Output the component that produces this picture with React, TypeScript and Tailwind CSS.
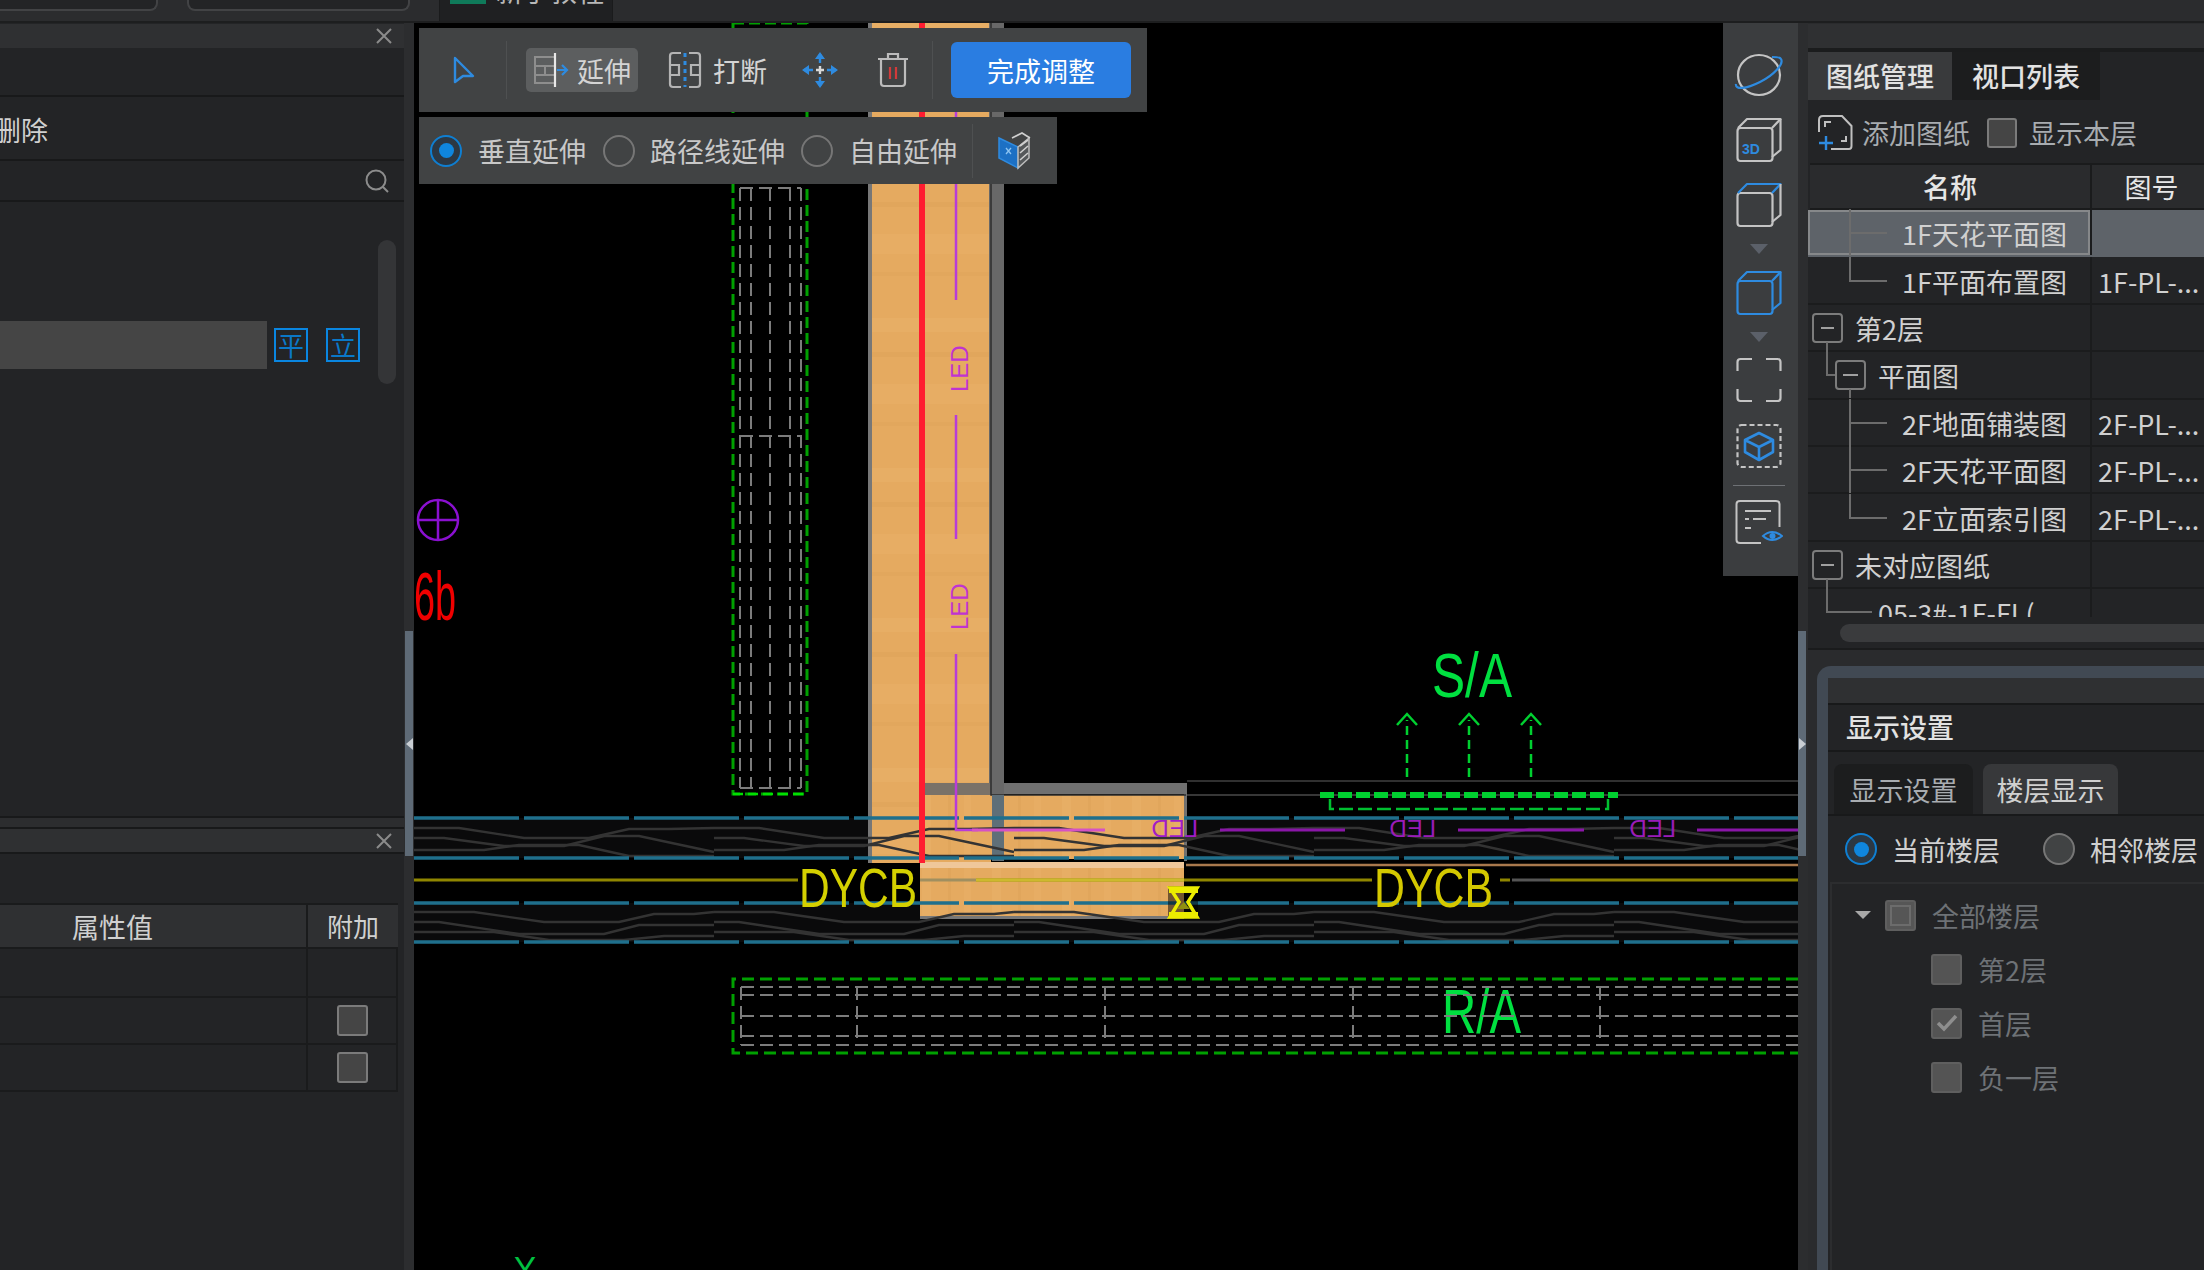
import React from "react";

const BLUE = "#2e8be0";
const GR = "#c4c4c4";

function Cube({ top, all, label }: { top?: boolean; all?: boolean; label?: boolean }) {
  const c = all ? BLUE : GR;
  const t = top || all ? BLUE : GR;
  return (
    <svg width="46" height="46" viewBox="0 0 46 46" fill="none" strokeWidth="2.2" strokeLinejoin="round">
      <rect x="1.5" y="11" width="35" height="33" rx="3" stroke={c} />
      <path d="M2 11 L11 2 H44.5 L36 11" stroke={t} />
      <path d="M44.5 2 V33 L36 40" stroke={all ? BLUE : GR} />
      {label && <text x="6" y="37" fontSize="14" fontWeight="700" fill={BLUE} className="font-['Liberation_Sans',sans-serif]">3D</text>}
    </svg>
  );
}

function Tri() {
  return <div className="mx-auto h-0 w-0 border-x-[9px] border-t-[10px] border-x-transparent border-t-[#5b6069]" />;
}

function VerticalTools() {
  return (
    <div className="absolute right-0 top-0 flex h-[553px] w-[75px] flex-col items-center bg-[#3b3d3f] pr-[3px] pt-[29px]">
      <svg width="50" height="46" viewBox="0 0 50 46" fill="none" strokeWidth="2.2">
        <ellipse cx="25" cy="23" rx="21" ry="20" stroke={GR} />
        <path d="M2 32 C1 38 12 37 26 30 C40 23 50 12 47 7 C46 5 42 5 38 5" stroke={BLUE} />
      </svg>
      <div className="mt-[19px]"><Cube label /></div>
      <div className="mt-[19px]"><Cube top /></div>
      <div className="mt-[16px]"><Tri /></div>
      <div className="mt-[16px]"><Cube all /></div>
      <div className="mt-[16px]"><Tri /></div>
      <svg className="mt-[15px]" width="46" height="46" viewBox="0 0 46 46" fill="none" stroke={GR} strokeWidth="2.2">
        <path d="M1.5 14 V5 Q1.5 2 4.5 2 H16 M30 2 H41.5 Q44.5 2 44.5 5 V14 M44.5 32 V41 Q44.5 44 41.5 44 H30 M16 44 H4.5 Q1.5 44 1.5 41 V32" />
      </svg>
      <svg className="mt-[20px]" width="46" height="46" viewBox="0 0 46 46" fill="none" strokeWidth="2.2">
        <rect x="1.5" y="2" width="43" height="42" rx="4" stroke={GR} strokeDasharray="5 3" />
        <path d="M23 10 L37 17 V29 L23 37 L9 29 V17 Z M9 17 L23 24 L37 17 M23 24 V37" stroke={BLUE} strokeWidth="2.6" strokeLinejoin="round" />
      </svg>
      <div className="mt-[16px] h-px w-[52px] bg-[#6e7175]" />
      <svg className="mt-[13px]" width="48" height="46" viewBox="0 0 48 46" fill="none" strokeWidth="2">
        <path d="M26 44 H5 Q1.5 44 1.5 41 V5 Q1.5 2 5 2 H41 Q44.5 2 44.5 5 V28" stroke={GR} />
        <path d="M10 12 H36 M10 20 H14 M18 20 H31 M10 29 H16" stroke={GR} />
        <path d="M28 37 Q37 29 47 37 Q37 45 28 37 Z" stroke={BLUE} />
        <circle cx="37.5" cy="37" r="3" fill={BLUE} />
      </svg>
    </div>
  );
}

function Radio({ on, size = 32 }: { on?: boolean; size?: number }) {
  return (
    <span
      style={{ width: size, height: size }}
      className={`flex shrink-0 items-center justify-center rounded-full border-2 ${on ? "border-[#0f7fd2] bg-[#2c3844]" : "border-[#767676] bg-[#414344]"}`}
    >
      {on && <span className="h-[15px] w-[15px] rounded-full bg-[#0f86de]" />}
    </span>
  );
}

function Toolbars() {
  return (
    <>
      <div className="absolute left-[5px] top-[5px] flex h-[84px] w-[728px] items-center bg-[#414344] text-[27px] leading-none text-[#d4d4d4]">
        <svg className="ml-[33px]" width="24" height="30" viewBox="0 0 24 30" fill="none" stroke={BLUE} strokeWidth="2.4" strokeLinejoin="round">
          <path d="M3 3 L21 21 L11 21 L3 27 Z" />
        </svg>
        <div className="ml-[30px] h-[58px] w-px bg-[#4e5051]" />
        <div className="ml-[19px] flex h-[44px] w-[112px] items-center rounded-[5px] bg-[#5c5e5f]">
          <svg className="ml-[7px]" width="36" height="36" viewBox="0 0 36 36" fill="none">
            <path d="M2 5 H22 V31 H2 Z M2 14 H22 M2 23 H22 M12 14 V23" stroke="#8e8e8e" strokeWidth="2" />
            <path d="M22 1 V35" stroke="#e8e8e8" strokeWidth="2.2" />
            <path d="M24 18 H34 M29 13 L34 18 L29 23" stroke={BLUE} strokeWidth="2.2" />
          </svg>
          <span className="ml-[8px]">延伸</span>
        </div>
        <svg className="ml-[30px]" width="34" height="38" viewBox="0 0 34 38" fill="none" strokeWidth="2.2">
          <path d="M13 2 H5 Q2 2 2 5 V33 Q2 36 5 36 H13 M21 2 H29 Q32 2 32 5 V33 Q32 36 29 36 H21 M2 14 H11 V24 H2 M32 14 H23 V24 H32" stroke="#b4b4b4" />
          <path d="M17 2 V36" stroke={BLUE} strokeWidth="3" strokeDasharray="4 4" />
        </svg>
        <span className="ml-[11px]">打断</span>
        <svg className="ml-[34px]" width="38" height="38" viewBox="0 0 38 38" fill="none" strokeWidth="2.4">
          <path d="M19 3 V12 M19 26 V35 M3 19 H12 M26 19 H35" stroke={BLUE} />
          <path d="M19 1 L14 8 H24 Z M19 37 L14 30 H24 Z M1 19 L8 14 V24 Z M37 19 L30 14 V24 Z" fill={BLUE} />
          <path d="M19 15 V23 M15 19 H23" stroke="#d8d8d8" />
        </svg>
        <svg className="ml-[38px]" width="32" height="36" viewBox="0 0 32 36" fill="none" strokeWidth="2.2">
          <path d="M1 7 H31 M11 6 V2 H21 V6 M4 8 V31 Q4 34 7 34 H25 Q28 34 28 31 V8" stroke="#bcbcbc" />
          <path d="M13 15 V27 M19 15 V27" stroke="#d13a3a" />
        </svg>
        <div className="ml-[23px] h-[58px] w-px bg-[#4e5051]" />
        <div className="ml-[18px] flex h-[56px] w-[180px] items-center justify-center rounded-[6px] bg-[#2a7de1] text-white">完成调整</div>
      </div>
      <div className="absolute left-[5px] top-[94px] flex h-[67px] w-[638px] items-center bg-[#414344] text-[27px] leading-none text-[#c8c8c8]">
        <span className="ml-[11px]"><Radio on /></span>
        <span className="ml-[16px]">垂直延伸</span>
        <span className="ml-[17px]"><Radio /></span>
        <span className="ml-[15px]">路径线延伸</span>
        <span className="ml-[16px]"><Radio /></span>
        <span className="ml-[16px]">自由延伸</span>
        <div className="ml-[15px] h-[54px] w-px bg-[#4e5051]" />
        <svg className="ml-[25px]" width="34" height="38" viewBox="0 0 34 38" fill="none">
          <path d="M1 6 L20 15 V36 L1 26 Z" fill="#1c70c4" stroke={BLUE} strokeWidth="1.5" />
          <path d="M20 15 L31 6 V26 L20 36 Z" fill="#55585a" stroke="#bcbcbc" strokeWidth="1.5" />
          <path d="M14 6 L24 1 L32 6 M22 14 L30 8 M22 21 L30 14 M22 28 L30 21" stroke="#cfcfcf" strokeWidth="1.6" />
          <path d="M8 16 L13 22 M8 22 L13 16" stroke="#8cc4f2" strokeWidth="1.3" />
        </svg>
      </div>
    </>
  );
}

const waveA = "M0 828 H45 L110 838 H175 L215 829 H255 L300 828";
const waveB = "M0 838 H30 L90 846 H150 L190 836 H225 L300 852";
const waveC = "M0 850 H70 L105 845 H165 L215 856 H300";
const waveD = "M0 912 L60 912 L130 922 H205 L240 914 H280 L300 912";
const waveE = "M0 922 H25 L105 934 H190 L225 925 H300";
const waveF = "M0 932 H80 L135 940 H210 L250 936 H300";
const offs = [414, 714, 1014, 1314, 1614];

function Canvas() {
  const sans = "font-['Liberation_Sans',sans-serif]";
  return (
    <svg className="absolute inset-0" width="1384" height="1247" viewBox="414 23 1384 1247">
      <defs>
        <pattern id="woodV" width="133" height="150" patternUnits="userSpaceOnUse">
          <rect width="133" height="150" fill="#e5aa60" />
          <rect y="18" width="133" height="14" fill="#e7ae65" />
          <rect y="52" width="133" height="5" fill="#e1a65c" />
          <rect y="84" width="133" height="20" fill="#e7ad64" />
          <rect y="122" width="133" height="4" fill="#e2a75d" />
        </pattern>
        <pattern id="woodH" width="70" height="60" patternUnits="userSpaceOnUse">
          <rect width="70" height="60" fill="#e5aa60" />
          <rect x="12" width="9" height="60" fill="#e7ae65" />
          <rect x="38" width="3" height="60" fill="#e1a65c" />
          <rect x="54" width="7" height="60" fill="#e7ad64" />
        </pattern>
      </defs>
      <rect x="414" y="23" width="1384" height="1247" fill="#000" />

      {/* upper duct */}
      <rect x="733" y="23" width="74" height="771" fill="none" stroke="#00a000" strokeWidth="3" strokeDasharray="11 5" />
      <path d="M733 794 H807" stroke="#00e000" strokeWidth="2.5" strokeDasharray="10 5" />
      <g stroke="#7c7c7c" strokeWidth="2" strokeDasharray="13 6" fill="none">
        <path d="M740 188 V788 M751 188 V788 M770 188 V788 M790 188 V788 M801 188 V788" />
        <path d="M740 188 H801 M740 436 H801 M740 788 H801" />
      </g>

      {/* insulation bands */}
      <rect x="414" y="818" width="1384" height="40" fill="#0a0a0b" />
      <rect x="414" y="903" width="1384" height="39" fill="#0a0a0b" />

      {/* wood */}
      <rect x="868" y="23" width="123" height="840" fill="url(#woodV)" />
      <rect x="868" y="23" width="4" height="840" fill="#777" />
      <rect x="925" y="795" width="259" height="64" fill="url(#woodH)" />
      <rect x="920" y="862" width="264" height="57" fill="url(#woodH)" />
      <rect x="920" y="862" width="264" height="6" fill="#efc79a" />
      <rect x="920" y="916" width="248" height="3" fill="#777" />
      <rect x="1184" y="783" width="3" height="78" fill="#707070" />

      <rect x="989" y="23" width="15" height="772" fill="#686868" />
      <path d="M991 23 V795 H1186" stroke="#2c2c2c" strokeWidth="1.5" fill="none" />
      <rect x="992" y="795" width="12" height="66" fill="#5f6f78" />
      <rect x="925" y="783" width="65" height="12" fill="#7a7268" />
      <rect x="1004" y="783" width="180" height="11" fill="#707070" />

      {/* waves */}
      <g fill="none" stroke="#333333" strokeWidth="2.4">
        {offs.map((x) => (
          <g key={x} transform={`translate(${x} 0)`}>
            <path d={waveA} />
            <path d={waveB} />
            <path d={waveC} />
            <path d={waveD} />
            <path d={waveE} />
            <path d={waveF} />
          </g>
        ))}
      </g>

      {/* horizontal rules */}
      <path d="M1187 781 H1798" stroke="#303030" strokeWidth="2" />
      <path d="M1187 795 H1798" stroke="#4a4a4a" strokeWidth="1.5" />
      <path d="M414 818 H1798 M414 858 H1798 M414 903 H1798 M414 942 H1798" stroke="#1f6f8c" strokeWidth="3.5" strokeDasharray="105 5" />
      <path d="M1186 865 H1798" stroke="#a8784c" strokeWidth="2.5" />
      <path d="M414 880 H798 M976 880 H1372 M1500 880 H1510 M1550 880 H1798" stroke="#8f8600" strokeWidth="3" />
      <path d="M920 880 H976" stroke="#a08f60" strokeWidth="3" />
      <path d="M976 880 H1184" stroke="#cdb92e" strokeWidth="3" />
      <path d="M1512 880 H1550" stroke="#555" strokeWidth="3" />

      {/* magenta LED */}
      <path d="M956 28 V300 M956 415 V539 M956 654 V830 H978" stroke="#b83cd8" strokeWidth="2.5" fill="none" />
      <path d="M972 830 H1105" stroke="#d552c4" strokeWidth="3" />
      <path d="M1220 830 H1345 M1458 830 H1584 M1697 830 H1798" stroke="#8a16a8" strokeWidth="3" />
      <text transform="translate(968 392) rotate(-90)" fontSize="24" fill="#c033d0" className={sans}>LED</text>
      <text transform="translate(968 630) rotate(-90)" fontSize="24" fill="#c033d0" className={sans}>LED</text>
      <text transform="translate(1198 837) scale(-1 1)" fontSize="24" fill="#a21cc8" className={sans}>LED</text>
      <text transform="translate(1436 837) scale(-1 1)" fontSize="24" fill="#9a1cb8" className={sans}>LED</text>
      <text transform="translate(1676 837) scale(-1 1)" fontSize="24" fill="#9a1cb8" className={sans}>LED</text>

      {/* red */}
      <rect x="919" y="23" width="6" height="840" fill="#ff1c30" />

      {/* labels */}
      <text x="799" y="907" fontSize="56" textLength="118" lengthAdjust="spacingAndGlyphs" fill="#d4d000" className={sans}>DYCB</text>
      <text x="1374" y="907" fontSize="56" textLength="119" lengthAdjust="spacingAndGlyphs" fill="#d4c800" className={sans}>DYCB</text>
      <text x="1432" y="697" fontSize="63" textLength="80" lengthAdjust="spacingAndGlyphs" fill="#00e040" className={sans}>S/A</text>
      <text x="1442" y="1033" fontSize="63" textLength="79" lengthAdjust="spacingAndGlyphs" fill="#00e040" className={sans}>R/A</text>
      <text x="414" y="620" fontSize="68" textLength="42" lengthAdjust="spacingAndGlyphs" fill="#f00000" className={sans}>6b</text>
      <text x="514" y="1280" fontSize="34" textLength="22" lengthAdjust="spacingAndGlyphs" fill="#00c040" className={sans}>Y</text>

      {/* purple target */}
      <g stroke="#8a10d0" strokeWidth="2.5" fill="none">
        <circle cx="438" cy="520" r="20" />
        <path d="M418 520 H458 M438 500 V540" />
      </g>

      {/* S/A arrows */}
      <g stroke="#00d030" strokeWidth="2.5" fill="none">
        <path d="M1407 777 V720 M1469 777 V720 M1531 777 V720" strokeDasharray="9 5" />
        <path d="M1397 725 L1407 714 L1417 725 M1459 725 L1469 714 L1479 725 M1521 725 L1531 714 L1541 725" />
      </g>
      <path d="M1320 795 H1618" stroke="#00d030" strokeWidth="6" strokeDasharray="14 4" />
      <path d="M1330 799 V809 H1608 V799" fill="none" stroke="#00c030" strokeWidth="2.5" strokeDasharray="14 5" />

      {/* lower duct */}
      <path d="M1798 979 H733 V1053 H1798" fill="none" stroke="#00a000" strokeWidth="3" strokeDasharray="12 6" />
      <g stroke="#7c7c7c" strokeWidth="2" fill="none">
        <path d="M741 987 H1798 M741 995 H1798 M741 1016 H1798 M741 1036 H1798 M741 1045 H1798" strokeDasharray="13 6" />
        <path d="M741 987 V1045 M857 987 V1045 M1105 987 V1045 M1353 987 V1045 M1600 987 V1045" strokeDasharray="13 6" />
      </g>

      {/* hourglass */}
      <rect x="1168" y="886" width="30" height="33" fill="#000" opacity="0.5" />
      <path d="M1170 888 H1197 L1188 902 L1197 917 H1170 L1179 902 Z" fill="none" stroke="#ecec00" strokeWidth="3.5" />
      <path d="M1169 888 H1198 V893 H1169 Z M1169 912 H1198 V918 H1169 Z" fill="#ecec00" />
      <path d="M1177 909 H1190 L1184 902 Z" fill="#8f8f10" />
    </svg>
  );
}

function CloseX() {
  return (
    <svg width="16" height="16" viewBox="0 0 16 16" stroke="#8b8b8b" strokeWidth="2" className="mr-[12px]">
      <path d="M1 1 L15 15 M15 1 L1 15" />
    </svg>
  );
}

function Check({ className = "" }: { className?: string }) {
  return <span className={`block shrink-0 rounded-[3px] border-2 border-[#7b7b7b] bg-[#454545] ${className}`} />;
}

function BlueSquare({ t, className = "" }: { t: string; className?: string }) {
  return (
    <span className={`flex h-[34px] w-[34px] items-center justify-center border-2 border-[#0a86e0] text-[26px] leading-none text-[#0a78c8] ${className}`}>{t}</span>
  );
}

function LeftPanel() {
  return (
    <div className="flex w-[404px] shrink-0 flex-col bg-[#232426] text-[27px] leading-none text-[#d0d0d0]">
      <div className="h-px shrink-0" />
      <div className="flex h-[24px] shrink-0 items-center justify-end bg-[#2f3032]"><CloseX /></div>
      <div className="h-[49px] shrink-0 border-b-2 border-[#18191a]" />
      <div className="flex h-[64px] shrink-0 items-center overflow-hidden border-b-2 border-[#18191a] pt-[3px]">
        <span className="-ml-[6px]">删除</span>
      </div>
      <div className="flex h-[41px] shrink-0 items-center justify-end border-b-2 border-[#18191a] pr-[15px] pt-[1px]">
        <svg width="24" height="24" viewBox="0 0 24 24" fill="none" stroke="#8c8c8c" strokeWidth="2">
          <circle cx="11" cy="11" r="9.5" />
          <path d="M18 18 L23 23" />
        </svg>
      </div>
      <div className="flex h-[614px] shrink-0">
        <div className="flex h-[167px] w-[378px] items-end">
          <div className="h-[48px] w-[267px] bg-[#454545]" />
          <BlueSquare t="平" className="mb-[7px] ml-[7px]" />
          <BlueSquare t="立" className="mb-[7px] ml-[18px]" />
        </div>
        <div className="mt-[38px] h-[144px] w-[18px] rounded-full bg-[#343537]" />
      </div>
      <div className="h-[13px] shrink-0 border-y-2 border-[#18191a] bg-[#2c2d2f]" />
      <div className="flex h-[23px] shrink-0 items-center justify-end bg-[#2f3032]"><CloseX /></div>
      <div className="h-[51px] shrink-0 border-y-2 border-b-0 border-[#18191a]" />
      <div className="flex h-[46px] w-[398px] shrink-0 border-y-2 border-[#1a1b1c] bg-[#2f3032]">
        <div className="flex w-[306px] items-center pl-[72px]">属性值</div>
        <div className="flex flex-1 items-center justify-center border-l-2 border-[#1a1b1c] text-[26px]">附加</div>
      </div>
      {[false, true, true].map((c, i) => (
        <div key={i} className={`flex w-[398px] shrink-0 border-b-2 border-[#1a1b1c] ${i === 0 ? "h-[49px]" : "h-[47px]"}`}>
          <div className="w-[306px]" />
          <div className="flex flex-1 items-center justify-center border-x-2 border-[#1a1b1c]">
            {c && <Check className="h-[31px] w-[31px]" />}
          </div>
        </div>
      ))}
    </div>
  );
}

function Gutter({ dir }: { dir: "l" | "r" }) {
  return (
    <div className="flex w-[10px] shrink-0 flex-col bg-[#2c2d2f]">
      <div className="h-[608px] shrink-0" />
      <div className={`flex h-[225px] w-[8px] items-center justify-center bg-[#5e6a76] ${dir === "l" ? "ml-px" : ""}`}>
        {dir === "l" ? (
          <span className="h-0 w-0 border-y-[6px] border-r-[7px] border-y-transparent border-r-[#c9ced3]" />
        ) : (
          <span className="h-0 w-0 border-y-[6px] border-l-[7px] border-y-transparent border-l-[#c9ced3]" />
        )}
      </div>
    </div>
  );
}

type Kind = "first" | "mid" | "last" | "l1" | "l2" | "l3";

function TreeGlyph({ kind, sel }: { kind: Kind; sel?: boolean }) {
  const s = "#6c6c6c";
  if (kind === "first" || kind === "mid" || kind === "last") {
    return (
      <svg width="94" height="47" viewBox="0 0 94 47" fill="none" stroke={s} strokeWidth="2" className={`shrink-0 ${sel ? "-ml-[2px]" : ""}`}>
        <path d={kind === "last" ? "M42 0 V24 H79" : "M42 0 V47 M42 24 H79"} />
      </svg>
    );
  }
  if (kind === "l1") {
    return (
      <svg width="47" height="47" viewBox="0 0 47 47" fill="none" stroke={s} strokeWidth="2" className="shrink-0">
        <rect x="5" y="10" width="29" height="28" rx="3" stroke="#7c7c7c" />
        <path d="M13 24 H26" stroke="#a0a0a0" />
        <path d="M19 38 V47" />
      </svg>
    );
  }
  if (kind === "l2") {
    return (
      <svg width="70" height="47" viewBox="0 0 70 47" fill="none" stroke={s} strokeWidth="2" className="shrink-0">
        <path d="M19 0 V24 H28" />
        <rect x="28" y="10" width="29" height="28" rx="3" stroke="#7c7c7c" />
        <path d="M35 24 H50" stroke="#a0a0a0" />
        <path d="M42 38 V47" />
      </svg>
    );
  }
  return (
    <svg width="70" height="47" viewBox="0 0 70 47" fill="none" stroke={s} strokeWidth="2" className="shrink-0">
      <path d="M19 0 V24 H64" />
    </svg>
  );
}

const rows: { kind: Kind; name: string; no?: string; sel?: boolean }[] = [
  { kind: "mid", name: "1F天花平面图", sel: true },
  { kind: "last", name: "1F平面布置图", no: "1F-PL-..." },
  { kind: "l1", name: "第2层" },
  { kind: "l2", name: "平面图" },
  { kind: "mid", name: "2F地面铺装图", no: "2F-PL-..." },
  { kind: "mid", name: "2F天花平面图", no: "2F-PL-..." },
  { kind: "last", name: "2F立面索引图", no: "2F-PL-..." },
  { kind: "l1", name: "未对应图纸" },
  { kind: "l3", name: "05-3#-1F-FL(" },
];

function RightPanel() {
  return (
    <div className="flex w-[396px] shrink-0 flex-col overflow-hidden bg-[#2a2b2d] text-[27px] leading-none text-[#d0d0d0]">
      <div className="h-px shrink-0" />
      <div className="h-[24px] shrink-0 bg-[#2f3032]" />
      <div className="h-[4px] shrink-0 bg-[#1b1c1d]" />
      <div className="flex h-[48px] shrink-0 bg-[#232426]">
        <div className="flex w-[144px] items-center justify-center bg-[#393a3c] pb-[2px] font-medium text-[#e2e2e2]">图纸管理</div>
        <div className="flex w-[148px] items-center justify-center bg-[#1c1d1e] pb-[2px] font-medium text-[#e2e2e2]">视口列表</div>
      </div>
      <div className="flex h-[63px] shrink-0 items-center bg-[#232426] pt-[2px] text-[#a8acb0]">
        <svg className="ml-[9px]" width="36" height="38" viewBox="0 0 36 38" fill="none" strokeWidth="2">
          <path d="M14 35 H32 Q34.5 35 34.5 32 V12 L25 2 H6 Q2 2 2 6 V18" stroke="#c0c0c0" />
          <path d="M8 13 V8 H14 M24 27 H29 V22" stroke="#c0c0c0" />
          <path d="M9 22 V36 M2 29 H16" stroke={BLUE} strokeWidth="2.4" />
        </svg>
        <span className="ml-[9px]">添加图纸</span>
        <Check className="ml-[17px] h-[30px] w-[30px]" />
        <span className="ml-[12px]">显示本层</span>
      </div>
      <div className="h-[454px] shrink-0 overflow-hidden bg-[#232426] pl-[2px]">
        <div className="flex h-[47px] border-y-2 border-[#1a1b1c] bg-[#2a2b2d] font-medium text-[#e6e6e6]">
          <div className="flex w-[280px] items-center justify-center">名称</div>
          <div className="flex flex-1 items-center justify-center border-l-2 border-[#1a1b1c] pl-[7px] font-normal">图号</div>
        </div>
        {rows.map((r) => (
          <div key={r.name} className={`-ml-[2px] flex h-[47.4px] border-b-2 ${r.sel ? "border-[#5e6369] bg-[#5e6369]" : "border-[#1b1c1d]"}`}>
            <div className={`flex w-[282px] shrink-0 items-center ${r.sel ? "border-2 border-[#86888a]" : ""}`}>
              <TreeGlyph kind={r.kind} sel={r.sel} />
              <span className="whitespace-nowrap pt-[2px]">{r.name}</span>
            </div>
            <div className="flex flex-1 items-center whitespace-nowrap border-l-2 border-[#1b1c1d] pl-[6px] pt-[2px]">{r.no}</div>
          </div>
        ))}
      </div>
      <div className="flex h-[33px] shrink-0 items-center border-b-2 border-[#1a1b1c] bg-[#232426] pl-[32px]">
        <div className="h-[18px] flex-1 rounded-l-full bg-[#3a3b3d]" />
      </div>
      <div className="h-[16px] shrink-0" />
      <div className="ml-[9px] flex flex-1 flex-col rounded-tl-[14px] border-l-[11px] border-t-[12px] border-[#414953] bg-[#232426]">
        <div className="h-[25px] shrink-0 bg-[#2f3032]" />
        <div className="flex h-[49px] shrink-0 items-center border-y-2 border-[#18191a] pb-[2px] pl-[18px] font-medium text-[#e2e2e2]">显示设置</div>
        <div className="flex h-[64px] shrink-0 items-end border-b-2 border-[#18191a] pl-[6px]">
          <div className="flex h-[50px] w-[139px] items-center justify-center rounded-t-[8px] bg-[#1c1d1e] text-[#a8acb0]">显示设置</div>
          <div className="ml-[10px] flex h-[50px] w-[135px] items-center justify-center rounded-t-[8px] bg-[#37383a]">楼层显示</div>
        </div>
        <div className="flex h-[66px] shrink-0 items-center pl-[17px]">
          <Radio on />
          <span className="ml-[15px]">当前楼层</span>
          <span className="ml-[43px]"><Radio /></span>
          <span className="ml-[15px] whitespace-nowrap">相邻楼层</span>
        </div>
        <div className="ml-[2px] flex flex-1 flex-col border-l-2 border-t-2 border-[#2c2d2f] pt-[4px] text-[#6e7276]">
          <div className="flex h-[54px] items-center">
            <span className="ml-[23px] h-0 w-0 border-x-[8px] border-t-[8px] border-x-transparent border-t-[#a8a8a8]" />
            <span className="ml-[14px] flex h-[31px] w-[31px] items-center justify-center rounded-[3px] border-2 border-[#5f5f5f] bg-[#565656]">
              <span className="h-[21px] w-[21px] border-2 border-[#6c6c6c]" />
            </span>
            <span className="ml-[16px]">全部楼层</span>
          </div>
          <div className="flex h-[54px] items-center pl-[99px]">
            <span className="h-[31px] w-[31px] rounded-[3px] border-2 border-[#5f5f5f] bg-[#545454]" />
            <span className="ml-[16px]">第2层</span>
          </div>
          <div className="flex h-[54px] items-center pl-[99px]">
            <span className="flex h-[31px] w-[31px] items-center justify-center rounded-[3px] border-2 border-[#5f5f5f] bg-[#545454]">
              <svg width="22" height="18" viewBox="0 0 22 18" fill="none" stroke="#8e8e8e" strokeWidth="3.5"><path d="M2 9 L8 15 L20 2" /></svg>
            </span>
            <span className="ml-[16px]">首层</span>
          </div>
          <div className="flex h-[54px] items-center pl-[99px]">
            <span className="h-[31px] w-[31px] rounded-[3px] border-2 border-[#5f5f5f] bg-[#545454]" />
            <span className="ml-[16px]">负一层</span>
          </div>
        </div>
      </div>
    </div>
  );
}

function TopBar() {
  return (
    <div className="flex h-[23px] shrink-0 items-start border-b-2 border-[#1d1e1f] bg-[#2b2c2e]">
      <div className="h-[11px] w-[158px] rounded-br-[8px] border-b-2 border-r-2 border-[#424345] bg-[#232426]" />
      <div className="ml-[29px] h-[11px] w-[223px] rounded-b-[8px] border-x-2 border-b-2 border-[#424345] bg-[#232426]" />
      <div className="ml-[29px] flex h-[21px] w-[174px] items-start overflow-hidden border-x border-[#1a1b1c] bg-[#1f2022] pl-[10px] text-[27px] leading-none text-[#b8b8b8]">
        <span className="mr-[10px] block h-[4px] w-[36px] bg-[#0f7a5a]" />
        <span className="-mt-[23px]">新手教程</span>
      </div>
    </div>
  );
}

export default function App() {
  return (
    <div className="flex h-[1270px] w-[2204px] flex-col overflow-hidden bg-[#2a2b2d] font-['Noto_Sans_CJK_SC','Noto_Sans',sans-serif]">
      <TopBar />
      <div className="flex min-h-0 flex-1">
        <LeftPanel />
        <Gutter dir="l" />
        <div className="relative min-w-0 flex-1 overflow-hidden bg-black">
          <Canvas />
          <Toolbars />
          <VerticalTools />
        </div>
        <Gutter dir="r" />
        <RightPanel />
      </div>
    </div>
  );
}
